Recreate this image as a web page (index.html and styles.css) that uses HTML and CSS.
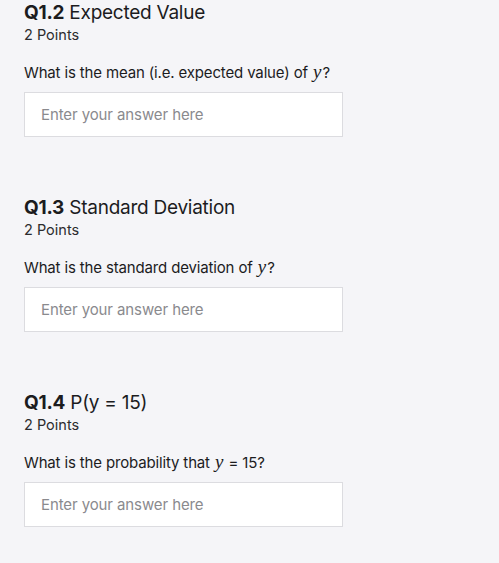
FILE: index.html
```html
<!DOCTYPE html>
<html>
<head>
<meta charset="utf-8">
<link rel="stylesheet" href="styles.css">
</head>
<body>
<main class="page">
  <section class="question">
    <h2 class="q-title"><strong>Q1.2</strong> Expected Value</h2>
    <div class="q-points">2 Points</div>
    <p class="q-text">What is the mean (i.e. expected value) of <span class="math">y</span>?</p>
    <input class="q-input" type="text" placeholder="Enter your answer here">
  </section>
  <section class="question">
    <h2 class="q-title"><strong>Q1.3</strong> Standard Deviation</h2>
    <div class="q-points">2 Points</div>
    <p class="q-text">What is the standard deviation of <span class="math">y</span>?</p>
    <input class="q-input" type="text" placeholder="Enter your answer here">
  </section>
  <section class="question">
    <h2 class="q-title"><strong>Q1.4</strong> P(y = 15)</h2>
    <div class="q-points">2 Points</div>
    <p class="q-text">What is the probability that <span class="math">y</span> = 15?</p>
    <input class="q-input" type="text" placeholder="Enter your answer here">
  </section>
</main>
</body>
</html>
```
FILE: styles.css
```css
html, body {
  margin: 0;
  padding: 0;
  background: #f5f5f8;
}
body {
  font-family: Inter, "Liberation Sans", sans-serif;
  color: #1c1c1e;
}
.page {
  display: flex;
  flex-direction: column;
  gap: 59px;
  padding: 1px 24px 0 24px;
}
.question {
  display: flex;
  flex-direction: column;
  width: 319px;
}
.q-title {
  margin: 0;
  font-size: 19px;
  line-height: 24px;
  font-weight: 400;
  letter-spacing: -0.25px;
}
.q-title strong {
  font-weight: 700;
}
.q-points {
  font-size: 14.5px;
  line-height: 20px;
  color: #2c2c2e;
}
.q-text {
  margin: 17px 0 0 0;
  font-size: 15px;
  line-height: 22px;
  height: 22px;
  letter-spacing: -0.15px;
}
.math {
  font-family: "Liberation Serif", serif;
  font-style: italic;
  font-size: 19px;
  line-height: 0;
  letter-spacing: 0;
  padding: 0 1px;
}
.q-input {
  margin: 8px 0 0 0;
  box-sizing: border-box;
  width: 319px;
  height: 45px;
  border: 1px solid #dcdce0;
  background: #fff;
  padding: 0 16px;
  font-family: inherit;
  font-size: 15px;
  letter-spacing: -0.1px;
  color: #222;
  outline: none;
}
.q-input::placeholder {
  color: #8a8a8e;
}
```
